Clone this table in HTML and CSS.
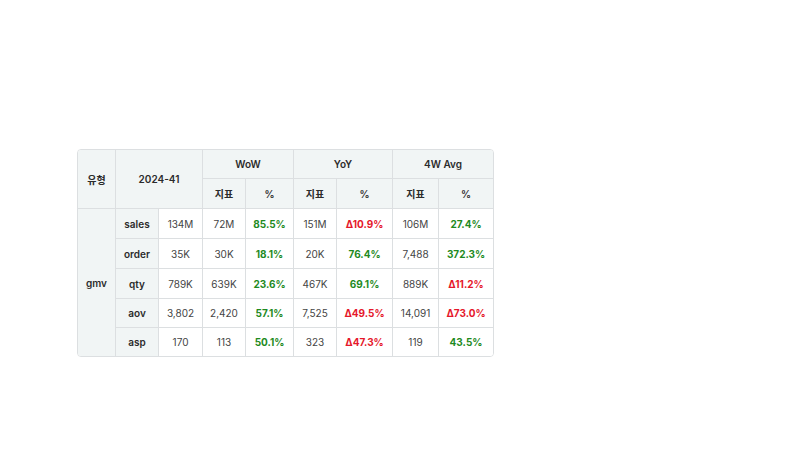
FILE: index.html
```html
<!DOCTYPE html>
<html lang="ko">
<head>
<meta charset="utf-8">
<link rel="stylesheet" href="styles.css">
</head>
<body>
<div class="page">
  <div class="wrap">
    <table class="grid">
      <colgroup>
        <col class="c1"><col class="c2"><col class="c3"><col class="c4"><col class="c5"><col class="c6"><col class="c7"><col class="c8"><col class="c9">
      </colgroup>
      <thead>
        <tr class="h1">
          <th rowspan="2">유형</th>
          <th rowspan="2" colspan="2">2024-41</th>
          <th colspan="2">WoW</th>
          <th colspan="2">YoY</th>
          <th colspan="2" class="nr">4W Avg</th>
        </tr>
        <tr class="h2">
          <th>지표</th><th>%</th>
          <th>지표</th><th>%</th>
          <th>지표</th><th class="nr">%</th>
        </tr>
      </thead>
      <tbody>
        <tr>
          <th rowspan="5" class="type nb">gmv</th>
          <th class="lbl">sales</th><td>134M</td>
          <td>72M</td><td class="up">85.5%</td>
          <td>151M</td><td class="dn">Δ10.9%</td>
          <td>106M</td><td class="up nr">27.4%</td>
        </tr>
        <tr>
          <th class="lbl">order</th><td>35K</td>
          <td>30K</td><td class="up">18.1%</td>
          <td>20K</td><td class="up">76.4%</td>
          <td>7,488</td><td class="up nr">372.3%</td>
        </tr>
        <tr>
          <th class="lbl">qty</th><td>789K</td>
          <td>639K</td><td class="up">23.6%</td>
          <td>467K</td><td class="up">69.1%</td>
          <td>889K</td><td class="dn nr">Δ11.2%</td>
        </tr>
        <tr class="r4">
          <th class="lbl">aov</th><td>3,802</td>
          <td>2,420</td><td class="up">57.1%</td>
          <td>7,525</td><td class="dn">Δ49.5%</td>
          <td>14,091</td><td class="dn nr">Δ73.0%</td>
        </tr>
        <tr class="last">
          <th class="lbl">asp</th><td>170</td>
          <td>113</td><td class="up">50.1%</td>
          <td>323</td><td class="dn">Δ47.3%</td>
          <td>119</td><td class="up nr">43.5%</td>
        </tr>
      </tbody>
    </table>
  </div>
</div>
</body>
</html>
```
FILE: styles.css
```css
html, body {
  margin: 0;
  padding: 0;
  background: #ffffff;
}
body {
  font-family: Inter, "Noto Sans CJK KR", "Noto Sans", sans-serif;
  color: #333;
}
.page {
  height: 450px;
  display: flex;
  align-items: flex-start;
  padding: 149px 0 0 77px;
  box-sizing: border-box;
}
.wrap {
  border: 1px solid #dcdfe1;
  border-radius: 4px;
  overflow: hidden;
  width: 415px;
}
.grid {
  border-collapse: separate;
  border-spacing: 0;
  table-layout: fixed;
  width: 415px;
  font-size: 10px;
}
.c1 { width: 38px; }
.c2 { width: 43px; }
.c3 { width: 44px; }
.c4 { width: 43px; }
.c5 { width: 48px; }
.c6 { width: 43px; }
.c7 { width: 56px; }
.c8 { width: 46px; }
.c9 { width: 54px; }
th, td {
  border-right: 1px solid #dcdfe1;
  border-bottom: 1px solid #dcdfe1;
  padding: 0;
  text-align: center;
  box-sizing: border-box;
}
thead tr.h1 th { height: 29px; }
thead tr.h2 th { height: 30px; }
tbody tr td, tbody tr th { height: 30px; }
tbody tr.r4 td, tbody tr.r4 th { height: 29px; }
tbody tr.last td, tbody tr.last th { height: 28px; border-bottom: none; }
thead th {
  background: #f1f5f5;
  font-weight: 600;
  color: #2b2b2b;
}
th.type, th.lbl {
  background: #f1f5f5;
  font-weight: 600;
  color: #2b2b2b;
}
td {
  color: #444;
  background: #fff;
}
td.up {
  color: #1e8a1e;
  font-weight: 700;
}
td.dn {
  color: #e5182b;
  font-weight: 700;
}
.nr { border-right: none; }
.nb { border-bottom: none; }
```
